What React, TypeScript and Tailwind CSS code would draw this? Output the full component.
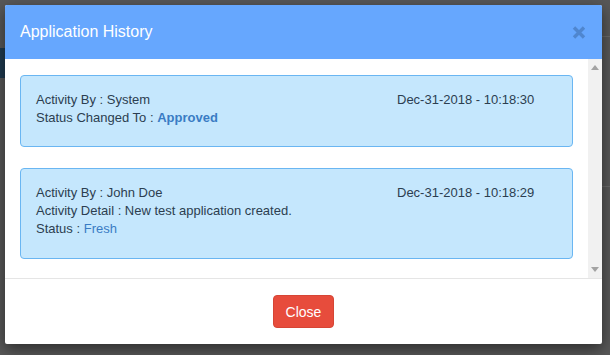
import React from "react";

function Card({ children, date, pb }: { children: React.ReactNode; date: string; pb: string }) {
  return (
    <div className={`rounded-[4px] border border-[#6ab6f2] bg-[#c5e7fd] pl-[15px] pr-[15px] pt-[15px] text-[13px] leading-[18px] text-[#2c3e50] ${pb}`}>
      <div className="grid grid-cols-[361px_1fr]">
        <div>{children}</div>
        <div>{date}</div>
      </div>
    </div>
  );
}

export default function App() {
  return (
    <div
      className="relative h-[355px] w-[610px] overflow-hidden bg-[#585858] pl-[5px] pt-[5px]"
      style={{ fontFamily: '"Liberation Sans", Arial, sans-serif' }}
    >
      <div className="absolute left-0 top-[48px] h-[30px] w-[5px] bg-[#1f3a4f]" />
      <div className="absolute right-0 top-[36px] h-px w-[8px] bg-[#6a6a6a]" />
      <div className="absolute right-0 top-[186px] h-px w-[8px] bg-[#6a6a6a]" />
      <div className="relative flex h-[339px] w-[597px] flex-col overflow-hidden rounded-[2px] bg-white shadow-[0_5px_15px_rgba(0,0,0,0.5)]">
        <div className="flex h-[54px] shrink-0 items-center justify-between bg-[#66a7fe] pl-[15px] pr-[16px]">
          <div className="text-[16px] leading-[20px] text-white">Application History</div>
          <svg width="14" height="13" viewBox="0 0 14 13" className="mt-[1px]">
            <path d="M2 1.5 L12 11.5 M12 1.5 L2 11.5" stroke="#4f86cf" strokeWidth="3.4" strokeLinecap="butt" />
          </svg>
        </div>
        <div className="flex h-[220px] shrink-0 border-b border-[#e5e5e5]">
          <div className="flex flex-1 flex-col gap-[21px] overflow-hidden px-[15px] pt-[16px]">
            <Card date="Dec-31-2018 - 10:18:30" pb="pb-[19px]">
              <div>Activity By : System</div>
              <div>
                Status Changed To : <span className="font-bold text-[#3a7cc4]">Approved</span>
              </div>
            </Card>
            <Card date="Dec-31-2018 - 10:18:29" pb="pb-[20px]">
              <div>Activity By : John Doe</div>
              <div>Activity Detail : New test application created.</div>
              <div>
                Status : <span className="text-[#3a7cc4]">Fresh</span>
              </div>
            </Card>
          </div>
          <div className="flex w-[14px] flex-col items-center justify-between bg-[#f1f1f1] py-[6px]">
            <svg width="8" height="5" viewBox="0 0 8 5">
              <path d="M0 5 L4 0 L8 5 Z" fill="#a3a3a3" />
            </svg>
            <svg width="8" height="5" viewBox="0 0 8 5">
              <path d="M0 0 L8 0 L4 5 Z" fill="#a3a3a3" />
            </svg>
          </div>
        </div>
        <div className="flex flex-1 items-center justify-center">
          <button className="h-[33px] rounded-[4px] border border-[#d64535] bg-[#e74c3c] px-[12px] text-[14px] leading-[20px] text-white">
            Close
          </button>
        </div>
      </div>
    </div>
  );
}
